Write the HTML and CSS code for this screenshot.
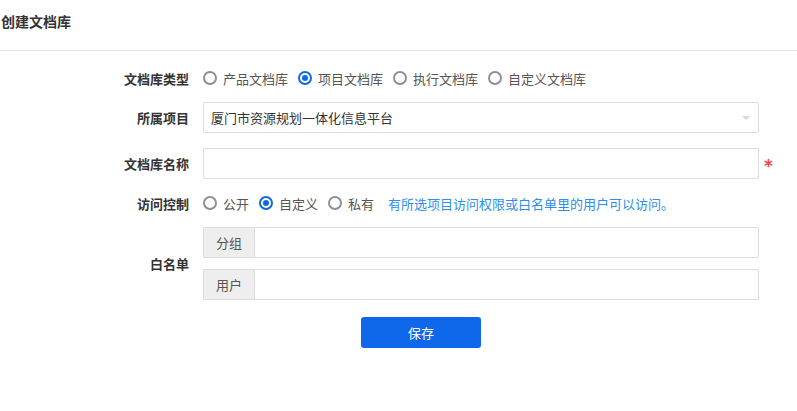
FILE: index.html
```html
<!DOCTYPE html>
<html lang="zh-CN">
<head>
<meta charset="utf-8">
<title>创建文档库</title>
<link rel="stylesheet" href="styles.css">
</head>
<body>
<header class="page-header">创建文档库</header>
<form class="form">
  <div class="row row-radio">
    <label class="label">文档库类型</label>
    <div class="control radios">
      <span class="radio"><i class="dot"></i>产品文档库</span>
      <span class="radio checked"><i class="dot"></i>项目文档库</span>
      <span class="radio"><i class="dot"></i>执行文档库</span>
      <span class="radio"><i class="dot"></i>自定义文档库</span>
    </div>
  </div>
  <div class="row row-input">
    <label class="label">所属项目</label>
    <div class="control">
      <div class="select">厦门市资源规划一体化信息平台<span class="caret"></span></div>
    </div>
  </div>
  <div class="row row-input row-name">
    <label class="label">文档库名称</label>
    <div class="control">
      <div class="input"></div>
    </div>
    <span class="required">*</span>
  </div>
  <div class="row row-radio">
    <label class="label">访问控制</label>
    <div class="control radios">
      <span class="radio"><i class="dot"></i>公开</span>
      <span class="radio checked"><i class="dot"></i>自定义</span>
      <span class="radio"><i class="dot"></i>私有</span>
      <span class="help">有所选项目访问权限或白名单里的用户可以访问。</span>
    </div>
  </div>
  <div class="row row-group">
    <label class="label">白名单</label>
    <div class="control groups">
      <div class="input-group"><span class="addon">分组</span><div class="group-input"></div></div>
      <div class="input-group"><span class="addon">用户</span><div class="group-input"></div></div>
    </div>
  </div>
  <div class="row row-actions">
    <button type="button" class="btn-save">保存</button>
  </div>
</form>
</body>
</html>
```

FILE: styles.css
```css
html, body {
  margin: 0;
  padding: 0;
  background: #fff;
}
body {
  font-family: "Noto Sans CJK SC", "Noto Sans", sans-serif;
  font-size: 13px;
  color: #333;
}
.page-header {
  height: 51px;
  line-height: 42px;
  padding-left: 1px;
  font-size: 14px;
  font-weight: 700;
  color: #333;
  border-bottom: 1px solid #e5e5e5;
  box-sizing: border-box;
}
.form {
  padding-top: 15px;
}
.row {
  display: flex;
  align-items: center;
}
.label {
  width: 189px;
  flex: none;
  text-align: right;
  font-weight: 700;
  color: #333;
  margin-right: 14px;
}
.control {
  width: 556px;
  flex: none;
}
.row-radio {
  height: 24px;
  margin-bottom: 12px;
}
.row-input {
  height: 31px;
  margin-bottom: 15px;
}
.row-name {
  margin-bottom: 12px;
}
.radios {
  display: flex;
  align-items: center;
}
.radio {
  display: inline-flex;
  align-items: center;
  color: #555;
  margin-right: 10px;
  white-space: nowrap;
}
.dot {
  width: 14px;
  height: 14px;
  box-sizing: border-box;
  border: 2px solid #8f8f99;
  border-radius: 50%;
  margin-right: 6px;
  position: relative;
  flex: none;
}
.radio.checked .dot {
  border-color: #0f67e9;
}
.radio.checked .dot::after {
  content: "";
  position: absolute;
  left: 2px;
  top: 2px;
  width: 6px;
  height: 6px;
  border-radius: 50%;
  background: #0f67e9;
}
.help {
  color: #2b8ef0;
  margin-left: 4px;
  white-space: nowrap;
}
.select, .input {
  box-sizing: border-box;
  height: 31px;
  border: 1px solid #dcdcdc;
  border-radius: 2px;
  background: #fff;
}
.select {
  position: relative;
  line-height: 29px;
  padding-left: 7px;
  color: #333;
}
.caret {
  position: absolute;
  right: 8px;
  top: 13px;
  width: 0;
  height: 0;
  border-left: 4px solid transparent;
  border-right: 4px solid transparent;
  border-top: 4px solid #d5d8dc;
}
.required {
  color: #f04848;
  margin-left: 5px;
  font-size: 17px;
  font-weight: 700;
  font-family: "DejaVu Sans", sans-serif;
  line-height: 1;
  padding-top: 6px;
}
.row-group {
  margin-bottom: 17px;
}
.groups {
  display: flex;
  flex-direction: column;
  gap: 11px;
}
.input-group {
  display: flex;
  height: 31px;
}
.addon {
  box-sizing: border-box;
  width: 51px;
  height: 31px;
  line-height: 29px;
  text-align: center;
  background: #eee;
  border: 1px solid #dcdcdc;
  border-right: none;
  border-radius: 2px 0 0 2px;
  color: #555;
}
.group-input {
  flex: 1;
  box-sizing: border-box;
  height: 31px;
  border: 1px solid #dcdcdc;
  border-radius: 0 2px 2px 0;
}
.row-actions {
  padding-left: 361px;
}
.btn-save {
  width: 120px;
  height: 31px;
  border: none;
  border-radius: 3px;
  background: #0f67e9;
  color: #fff;
  font-family: "Noto Sans CJK SC", "Noto Sans", sans-serif;
  font-size: 13px;
  padding: 0;
  cursor: pointer;
}
```
